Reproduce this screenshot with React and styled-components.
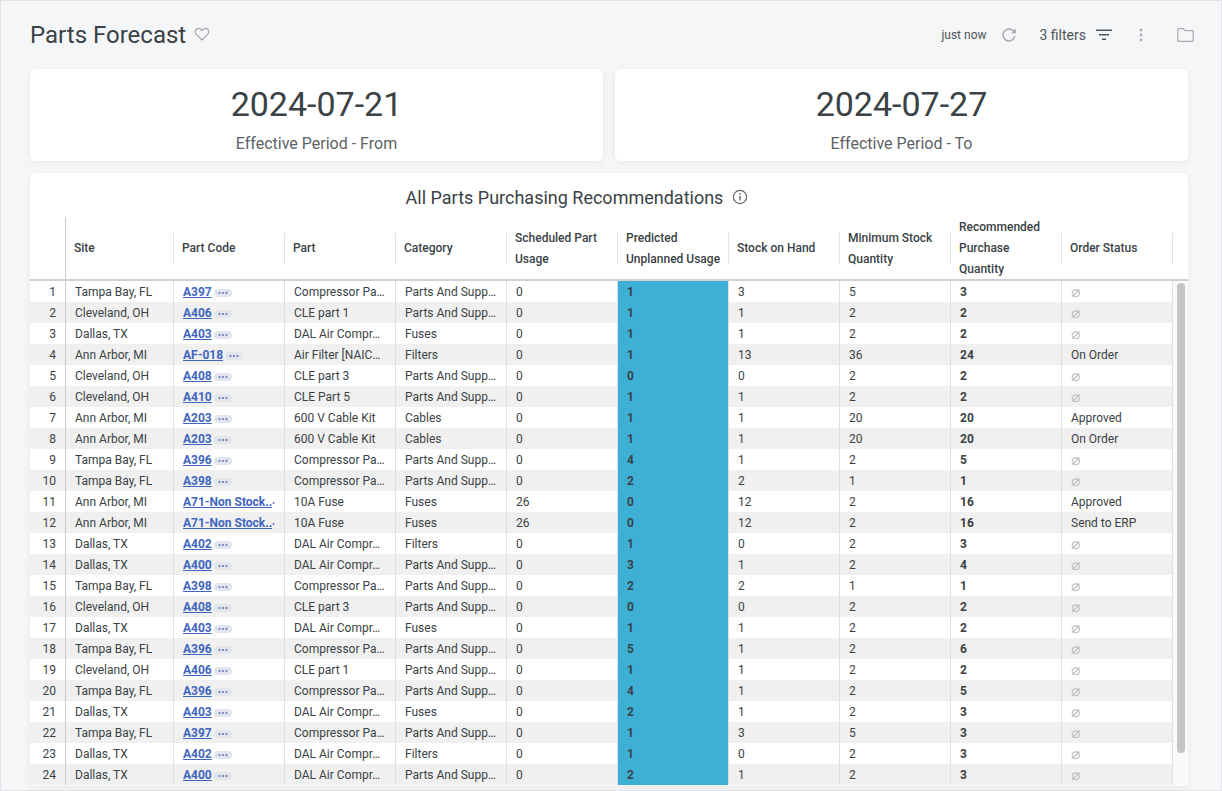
import React from 'react';
import styled, { createGlobalStyle } from 'styled-components';

const Global = createGlobalStyle`
  html, body { margin: 0; padding: 0; height: 100%; overflow: hidden; background: #f5f6f8; }
  #root { height: 100%; }
  * { box-sizing: border-box; }
`;

const Page = styled.div`
  width: 1222px;
  height: 791px;
  overflow: hidden;
  background: #f5f6f8;
  border: 1px solid #e1e3e7;
  padding: 0 33px 4px 29px;
  display: flex;
  flex-direction: column;
  font-family: Roboto, "Liberation Sans", sans-serif;
  color: #3a4245;
`;

const Header = styled.header`
  height: 68px;
  flex: none;
  display: flex;
  align-items: center;
  padding-bottom: 1px;
`;

const Title = styled.h1`
  margin: 0;
  font-size: 24px;
  font-weight: 400;
  line-height: 30px;
  color: #3a4245;
`;

const HeartButton = styled.span`
  display: flex;
  margin-left: 8px;
  margin-top: -2px;
  color: #a5a8ac;
`;

const Tools = styled.div`
  margin-left: auto;
  margin-right: -6px;
  display: flex;
  align-items: center;
`;

const Updated = styled.span`
  font-size: 12px;
  color: #4e5458;
`;

const ToolIcon = styled.span`
  display: flex;
  color: ${p => p.$color || '#a8abaf'};
  margin-left: ${p => p.$gap}px;
`;

const Filters = styled.span`
  font-size: 14px;
  color: #4e5458;
  margin-left: 23px;
`;

const Tiles = styled.div`
  display: grid;
  grid-template-columns: 1fr 1fr;
  gap: 12px;
  flex: none;
`;

const Card = styled.section`
  background: #fff;
  border-radius: 6px;
  box-shadow: 0 1px 6px rgba(30, 40, 60, 0.07);
`;

const Tile = styled(Card)`
  height: 92px;
  display: flex;
  flex-direction: column;
  align-items: center;
  padding-top: 13px;
`;

const TileValue = styled.div`
  font-size: 34px;
  line-height: 44px;
  color: #3a4245;
`;

const TileLabel = styled.div`
  font-size: 16px;
  line-height: 20px;
  margin-top: 8px;
  color: #5c6266;
`;

const TableCard = styled(Card)`
  margin-top: 12px;
  flex: 1;
  min-height: 0;
  position: relative;
  overflow: hidden;
  display: flex;
  flex-direction: column;
  border-radius: 6px 6px 0 0;
`;

const TableTitle = styled.div`
  height: 44px;
  flex: none;
  display: flex;
  align-items: center;
  justify-content: center;
  gap: 9px;
  font-size: 18px;
  color: #3a4245;
  padding-top: 4px;
  padding-right: 64px;
`;

const InfoIcon = styled.span`
  display: flex;
  color: #62676b;
`;

const columns = '36px 108px repeat(9, 111px)';

const HeadRow = styled.div`
  display: grid;
  grid-template-columns: ${columns} 15px;
  height: 64px;
  flex: none;
  border-bottom: 2px solid #cfd0d2;
`;

const IndexHead = styled.div`
  border-right: 1px solid #c9cbce;
`;

const HeadCell = styled.div`
  position: relative;
  display: flex;
  align-items: center;
  padding: 0 8px 2px;
  font-size: 12px;
  font-weight: 500;
  line-height: 21px;
  color: #3a4245;
  &::after {
    content: '';
    position: absolute;
    right: 0;
    top: 16px;
    height: 31px;
    width: 1px;
    background: #e2e3e5;
  }
`;

const Body = styled.div`
  flex: 1;
  min-height: 0;
  overflow: hidden;
  background: #fafafa;
`;

const Row = styled.div`
  display: grid;
  grid-template-columns: ${columns};
  width: 1143px;
  height: 21px;
  background: ${p => (p.$odd ? '#fff' : '#f0f0f0')};
`;

const Cell = styled.div`
  padding: 1px 0 0 9px;
  font-size: 12px;
  line-height: 21px;
  white-space: nowrap;
  overflow: hidden;
  border-right: 1px solid #e0e0e0;
  color: #3a4245;
  font-weight: ${p => (p.$bold ? 700 : 400)};
  background: ${p => p.$bg || 'transparent'};
`;

const IndexCell = styled(Cell)`
  padding: 1px 9px 0 0;
  text-align: right;
  border-right: 1px solid #c9cbce;
`;

const CodeWrap = styled.div`
  display: flex;
  align-items: center;
  height: 21px;
  width: 94px;
  overflow: hidden;
`;

const CodeLink = styled.a`
  font-weight: 700;
  color: #3f65bf;
  text-decoration: underline;
  white-space: nowrap;
  flex: none;
`;

const Pill = styled.span`
  flex: none;
  width: ${p => (p.$narrow ? '4px' : '18px')};
  height: 8px;
  margin: 1px 0 0 ${p => (p.$narrow ? '0' : '2px')};
  border-radius: 4px;
  background: ${p => (p.$narrow ? 'transparent' : '#e3e5ec')};
  color: #5b72b8;
  display: flex;
  align-items: center;
  justify-content: ${p => (p.$narrow ? 'flex-start' : 'center')};
  overflow: hidden;
`;

const NullMark = styled.span`
  font-family: "DejaVu Sans", sans-serif;
  font-size: 15px;
  line-height: 0;
  color: #bcbcbc;
  vertical-align: -1px;
`;

const ScrollThumb = styled.div`
  position: absolute;
  right: 3px;
  top: 110px;
  width: 8px;
  height: 470px;
  border-radius: 4px;
  background: #c4c4c4;
`;

const heads = [
  'Site', 'Part Code', 'Part', 'Category', 'Scheduled Part Usage', 'Predicted Unplanned Usage',
  'Stock on Hand', 'Minimum Stock Quantity', 'Recommended Purchase Quantity', 'Order Status',
];

const PARTS = { C: 'Compressor Pa…', L1: 'CLE part 1', L3: 'CLE part 3', L5: 'CLE Part 5', D: 'DAL Air Compr…', F: 'Air Filter [NAIC…', K: '600 V Cable Kit', A: '10A Fuse' };
const CATS = { P: 'Parts And Supp…', U: 'Fuses', I: 'Filters', B: 'Cables' };
const SITES = { T: 'Tampa Bay, FL', C: 'Cleveland, OH', D: 'Dallas, TX', A: 'Ann Arbor, MI' };
const LONG = 'A71-Non Stock..';

const rows = [
  ['T', 'A397', 'C', 'P', 0, 1, 3, 5, 3, ''],
  ['C', 'A406', 'L1', 'P', 0, 1, 1, 2, 2, ''],
  ['D', 'A403', 'D', 'U', 0, 1, 1, 2, 2, ''],
  ['A', 'AF-018', 'F', 'I', 0, 1, 13, 36, 24, 'On Order'],
  ['C', 'A408', 'L3', 'P', 0, 0, 0, 2, 2, ''],
  ['C', 'A410', 'L5', 'P', 0, 1, 1, 2, 2, ''],
  ['A', 'A203', 'K', 'B', 0, 1, 1, 20, 20, 'Approved'],
  ['A', 'A203', 'K', 'B', 0, 1, 1, 20, 20, 'On Order'],
  ['T', 'A396', 'C', 'P', 0, 4, 1, 2, 5, ''],
  ['T', 'A398', 'C', 'P', 0, 2, 2, 1, 1, ''],
  ['A', LONG, 'A', 'U', 26, 0, 12, 2, 16, 'Approved'],
  ['A', LONG, 'A', 'U', 26, 0, 12, 2, 16, 'Send to ERP'],
  ['D', 'A402', 'D', 'I', 0, 1, 0, 2, 3, ''],
  ['D', 'A400', 'D', 'P', 0, 3, 1, 2, 4, ''],
  ['T', 'A398', 'C', 'P', 0, 2, 2, 1, 1, ''],
  ['C', 'A408', 'L3', 'P', 0, 0, 0, 2, 2, ''],
  ['D', 'A403', 'D', 'U', 0, 1, 1, 2, 2, ''],
  ['T', 'A396', 'C', 'P', 0, 5, 1, 2, 6, ''],
  ['C', 'A406', 'L1', 'P', 0, 1, 1, 2, 2, ''],
  ['T', 'A396', 'C', 'P', 0, 4, 1, 2, 5, ''],
  ['D', 'A403', 'D', 'U', 0, 2, 1, 2, 3, ''],
  ['T', 'A397', 'C', 'P', 0, 1, 3, 5, 3, ''],
  ['D', 'A402', 'D', 'I', 0, 1, 0, 2, 3, ''],
  ['D', 'A400', 'D', 'P', 0, 2, 1, 2, 3, ''],
];

const Dots = () => (
  <svg width="10" height="2" viewBox="0 0 10 2" fill="currentColor" style={{ flex: 'none' }}>
    <circle cx="1.5" cy="1" r="1" /><circle cx="5" cy="1" r="1" /><circle cx="8.5" cy="1" r="1" />
  </svg>
);

const Heart = () => (
  <svg width="16" height="16" viewBox="0 0 16 16" fill="none" stroke="currentColor" strokeWidth="1.2">
    <path d="M8 14 2.4 8.4C.9 6.9.9 4.5 2.3 3.2c1.4-1.3 3.6-1.1 4.8.3L8 4.6l.9-1.1c1.2-1.4 3.4-1.6 4.8-.3 1.4 1.3 1.4 3.7-.1 5.2L8 14Z" />
  </svg>
);

const Refresh = () => (
  <svg width="16" height="16" viewBox="0 0 16 16" fill="none" stroke="currentColor" strokeWidth="1.5">
    <path d="M13.9 9.2A6 6 0 1 1 12.2 3.6L14.4 5.6" />
    <path d="M14.8 1.5v4.7h-4.7z" fill="currentColor" stroke="none" />
  </svg>
);

const FilterLines = () => (
  <svg width="16" height="12" viewBox="0 0 16 12" fill="currentColor">
    <rect x="0" y="0.5" width="16" height="1.5" /><rect x="3" y="5" width="10" height="1.5" /><rect x="6" y="9.5" width="4" height="1.5" />
  </svg>
);

const More = () => (
  <svg width="4" height="14" viewBox="0 0 4 14" fill="currentColor">
    <circle cx="2" cy="2" r="1.4" /><circle cx="2" cy="7" r="1.4" /><circle cx="2" cy="12" r="1.4" />
  </svg>
);

const Folder = () => (
  <svg width="17" height="14" viewBox="0 0 17 14" fill="none" stroke="currentColor" strokeWidth="1.2">
    <path d="M1.5.7h4.7l1.7 2h7.6c.4 0 .7.3.7.7v9.2c0 .4-.3.7-.7.7H1.5c-.4 0-.7-.3-.7-.7V1.4c0-.4.3-.7.7-.7Z" />
  </svg>
);

const Info = () => (
  <svg width="16" height="16" viewBox="0 0 16 16" fill="none" stroke="currentColor" strokeWidth="1.2">
    <circle cx="8" cy="8" r="6.6" />
    <path d="M8 7v4.5" strokeWidth="1.4" />
    <circle cx="8" cy="4.8" r="0.9" fill="currentColor" stroke="none" />
  </svg>
);

export default function App() {
  return (
    <Page>
      <Global />
      <Header>
        <Title>Parts Forecast</Title>
        <HeartButton><Heart /></HeartButton>
        <Tools>
          <Updated>just now</Updated>
          <ToolIcon $gap={14}><Refresh /></ToolIcon>
          <Filters>3 filters</Filters>
          <ToolIcon $gap={10} $color="#4e5458"><FilterLines /></ToolIcon>
          <ToolIcon $gap={27}><More /></ToolIcon>
          <ToolIcon $gap={34}><Folder /></ToolIcon>
        </Tools>
      </Header>
      <Tiles>
        <Tile><TileValue>2024-07-21</TileValue><TileLabel>Effective Period - From</TileLabel></Tile>
        <Tile><TileValue>2024-07-27</TileValue><TileLabel>Effective Period - To</TileLabel></Tile>
      </Tiles>
      <TableCard>
        <TableTitle>
          All Parts Purchasing Recommendations
          <InfoIcon><Info /></InfoIcon>
        </TableTitle>
        <HeadRow>
          <IndexHead />
          {heads.map(h => <HeadCell key={h}><span>{h}</span></HeadCell>)}
        </HeadRow>
        <Body>
          {rows.map((r, i) => (
            <Row key={i} $odd={i % 2 === 0}>
              <IndexCell>{i + 1}</IndexCell>
              <Cell>{SITES[r[0]]}</Cell>
              <Cell>
                <CodeWrap>
                  <CodeLink>{r[1]}</CodeLink>
                  <Pill $narrow={r[1] === LONG}><Dots /></Pill>
                </CodeWrap>
              </Cell>
              <Cell>{PARTS[r[2]]}</Cell>
              <Cell>{CATS[r[3]]}</Cell>
              <Cell>{r[4]}</Cell>
              <Cell $bold $bg="#3eb0d5">{r[5]}</Cell>
              <Cell>{r[6]}</Cell>
              <Cell>{r[7]}</Cell>
              <Cell $bold>{r[8]}</Cell>
              <Cell>{r[9] || <NullMark>⌀</NullMark>}</Cell>
            </Row>
          ))}
        </Body>
        <ScrollThumb />
      </TableCard>
    </Page>
  );
}
